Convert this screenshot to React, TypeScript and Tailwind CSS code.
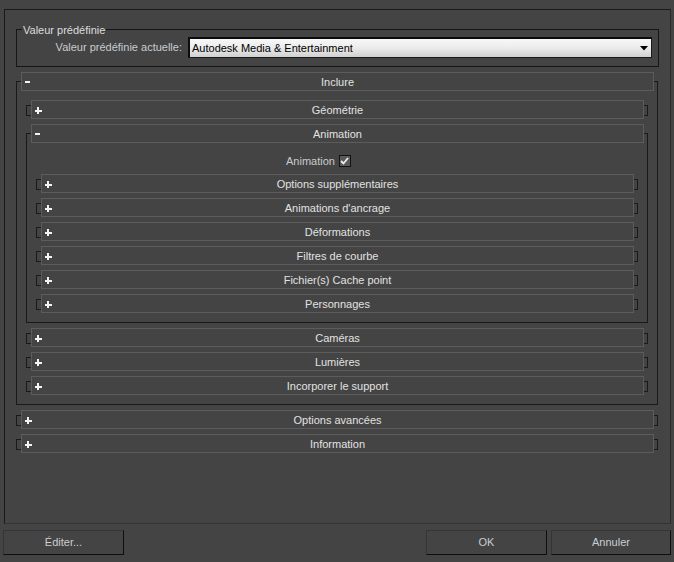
import type { ReactNode } from "react";

type RolloutProps = {
  title: string;
  open?: boolean;
  children?: ReactNode;
};

function Sign({ open }: { open: boolean }) {
  if (open) return <span className="block w-[5px] h-[2px] bg-[#f0f0f0]" />;
  return (
    <span className="relative block w-[7px] h-[7px]">
      <span className="absolute left-0 top-[3px] w-[7px] h-[2px] bg-[#f4f4f4]" />
      <span className="absolute left-[2px] top-0 w-[2px] h-[7px] bg-[#f4f4f4]" />
    </span>
  );
}

function Rollout({ title, open = false, children }: RolloutProps) {
  return (
    <div className="relative">
      {/* frame behind the header: full box when open, small bracket when closed */}
      {open ? (
        <div className="absolute left-[-5px] right-[-4px] top-[9px] bottom-0 border border-[#1a1a1a]" />
      ) : (
        <div className="absolute left-[-5px] right-[-4px] top-[5px] h-[11px] border border-[#1a1a1a]" />
      )}
      <div className="relative grid grid-cols-[20px_1fr_20px] items-center h-[19px] border border-[#5c5c5c] bg-[#444444] text-[#e2e2e2] leading-[17px]">
        <span className="pl-[3px] flex items-center">
          <Sign open={open} />
        </span>
        <span className="pt-[1px] text-center whitespace-nowrap">{title}</span>
        <span />
      </div>
      {open && (
        <div className="relative flex flex-col gap-[5px] px-[10px] pt-[9px] pb-[10px]">
          {children}
        </div>
      )}
    </div>
  );
}

function DialogButton({ label, width }: { label: string; width: string }) {
  return (
    <button
      className={`${width} h-[25px] bg-[#444444] border border-t-[#353535] border-l-[#353535] border-b-[#0e0e0e] border-r-[#0e0e0e] text-[#c9ced2]`}
    >
      {label}
    </button>
  );
}

export default function App() {
  return (
    <div className="w-[674px] h-[562px] bg-[#444444] flex flex-col overflow-hidden text-[11px] font-['Liberation_Sans',Arial,sans-serif]">
      {/* Main panel */}
      <div className="mt-[9px] ml-[4px] w-[667px] h-[515px] flex flex-col border border-t-[#1a1a1a] border-l-[#1a1a1a] border-r-[#2a2a2a] border-b-[#333333]">
        {/* Preset group */}
        <div className="relative mx-[11px] mt-[19px] h-[38px] border border-[#161616]">
          <span className="absolute top-[-7px] left-[5px] px-[1px] bg-[#444444] text-[#dcdcdc] leading-[14px]">
            Valeur prédéfinie
          </span>
          <div className="flex items-start justify-end pt-[7px] pr-[6px]">
            <span className="mr-[6px] leading-[21px] text-[#c6ccd0]">
              Valeur prédéfinie actuelle:
            </span>
            <div className="w-[464px] h-[21px] flex items-center justify-between border border-[#1a1a1a] border-t-2 border-l-2 border-t-[#0c0c0c] border-l-[#0c0c0c] bg-linear-to-b from-[#f8f8f8] via-[#ebebeb] to-[#d0d0d0] pl-[2px] pr-[3px] text-black">
              <span>Autodesk Media &amp; Entertainment</span>
              <svg width="8" height="5" viewBox="0 0 8 5">
                <path d="M0 0 H8 L4 4.5 Z" fill="#000" />
              </svg>
            </div>
          </div>
        </div>

        {/* Rollouts */}
        <div className="mt-[5px] mx-[16px] flex flex-col gap-[5px]">
          <Rollout title="Inclure" open>
            <Rollout title="Géométrie" />
            <Rollout title="Animation" open>
              <div className="h-[17px] flex items-center pl-[245px]">
                <span className="pt-[1px] text-[#c6ccd0]">Animation</span>
                <span className="ml-[4px] w-[12px] h-[12px] flex items-center justify-center border border-[#121212] bg-[#5a5a5a]">
                  <svg width="9" height="8" viewBox="0 0 9 8">
                    <path d="M1 4 L3.5 6.5 L8 1" stroke="#ececec" strokeWidth="1.8" fill="none" />
                  </svg>
                </span>
              </div>
              <Rollout title="Options supplémentaires" />
              <Rollout title="Animations d'ancrage" />
              <Rollout title="Déformations" />
              <Rollout title="Filtres de courbe" />
              <Rollout title="Fichier(s) Cache point" />
              <Rollout title="Personnages" />
            </Rollout>
            <Rollout title="Caméras" />
            <Rollout title="Lumières" />
            <Rollout title="Incorporer le support" />
          </Rollout>
          <Rollout title="Options avancées" />
          <Rollout title="Information" />
        </div>
      </div>

      {/* Bottom buttons */}
      <div className="mt-[6px] flex items-center px-[3px]">
        <DialogButton label="Éditer..." width="w-[121px]" />
        <div className="flex-1" />
        <DialogButton label="OK" width="w-[121px]" />
        <div className="w-[4px]" />
        <DialogButton label="Annuler" width="w-[120px]" />
      </div>
    </div>
  );
}
